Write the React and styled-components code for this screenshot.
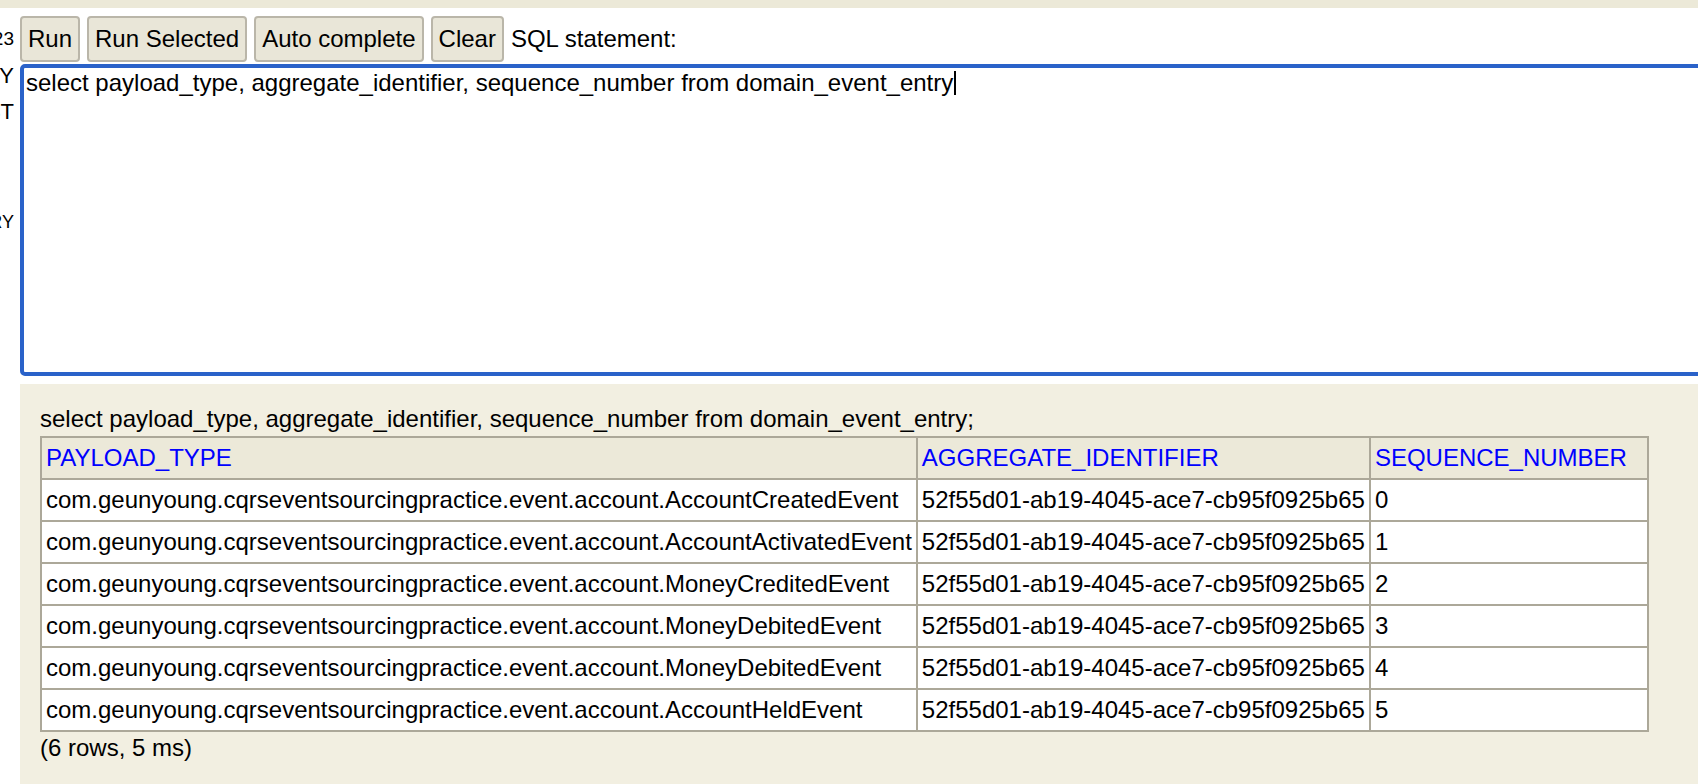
import styled, { createGlobalStyle } from "styled-components";

const GlobalStyle = createGlobalStyle`
  html, body {
    margin: 0;
    padding: 0;
    background: #ffffff;
    overflow: hidden;
  }
  body {
    font-family: "Liberation Sans", Arial, Helvetica, sans-serif;
    font-size: 24px;
    color: #000000;
  }
`;

const Page = styled.div`
  width: 100vw;
  height: 100vh;
  display: flex;
  flex-direction: column;
  overflow: hidden;
`;

const TopStrip = styled.div`
  height: 8px;
  flex: none;
  background: #ece9d8;
`;

const Body = styled.div`
  flex: 1;
  display: flex;
  min-height: 0;
`;

const Tree = styled.div`
  width: 14px;
  flex: none;
  overflow: hidden;
  padding-top: 13px;
`;

const TreeRow = styled.div`
  height: 36.6px;
  line-height: 36.6px;
  display: flex;
  justify-content: flex-end;
  white-space: nowrap;
  font-size: ${(p) => p.$size || 22}px;
`;

const Main = styled.div`
  flex: 1;
  min-width: 0;
  margin-left: 6px;
  display: flex;
  flex-direction: column;
`;

const Toolbar = styled.div`
  display: flex;
  align-items: center;
  gap: 7px;
  margin-top: 8px;
  height: 46px;
`;

const Button = styled.button`
  height: 46px;
  padding: 0 6px;
  font-family: inherit;
  font-size: 24px;
  line-height: 28px;
  color: #000;
  background: #e9e6d8;
  border: 2px solid #bab6a9;
  border-radius: 4px;
`;

const Label = styled.span`
  white-space: nowrap;
`;

const Editor = styled.div`
  margin-top: 2px;
  width: 1800px;
  height: 302px;
  flex: none;
  border: 4px solid #2a62c9;
  border-radius: 5px;
  padding: 1px 2px;
  line-height: 28px;
  white-space: nowrap;
  background: #fff;
`;

const Caret = styled.span`
  display: inline-block;
  width: 2px;
  height: 24px;
  margin-left: 1px;
  vertical-align: -4px;
  background: #000;
`;

const Results = styled.div`
  margin-top: 8px;
  flex: 1;
  background: #f2efe1;
  padding: 21px 0 0 20px;
`;

const Statement = styled.div`
  line-height: 28px;
  margin-bottom: 3px;
  white-space: nowrap;
`;

const Grid = styled.table`
  border-collapse: collapse;
  border: 2px solid #aca899;
  white-space: nowrap;
`;

const Head = styled.th`
  background: #ece9d9;
  color: #0000ff;
  font-weight: normal;
  text-align: left;
  padding: 6px ${(p) => (p.$wide ? 20 : 4)}px 6px 4px;
  line-height: 28px;
  border: 2px solid #aca899;
`;

const Cell = styled.td`
  background: #fff;
  padding: 6px 4px;
  line-height: 28px;
  border: 2px solid #aca899;
`;

const Summary = styled.div`
  line-height: 28px;
  margin-top: 2px;
`;

const sql =
  "select payload_type, aggregate_identifier, sequence_number from domain_event_entry";

const id = "52f55d01-ab19-4045-ace7-cb95f0925b65";
const pkg = "com.geunyoung.cqrseventsourcingpractice.event.account.";

const rows = [
  ["AccountCreatedEvent", 0],
  ["AccountActivatedEvent", 1],
  ["MoneyCreditedEvent", 2],
  ["MoneyDebitedEvent", 3],
  ["MoneyDebitedEvent", 4],
  ["AccountHeldEvent", 5],
];

const treeItems = [
  { text: "H2 2023", size: 19 },
  { text: "QUERY" },
  { text: "TOKEN_ENTRY_LIST" },
  { text: "" },
  { text: "" },
  { text: "SNAPSHOT_ENTRY", size: 18 },
];

export default function App() {
  return (
    <Page>
      <GlobalStyle />
      <TopStrip />
      <Body>
        <Tree>
          {treeItems.map((t, i) => (
            <TreeRow key={i} $size={t.size}>
              {t.text}
            </TreeRow>
          ))}
        </Tree>
        <Main>
          <Toolbar>
            <Button>Run</Button>
            <Button>Run Selected</Button>
            <Button>Auto complete</Button>
            <Button>Clear</Button>
            <Label>SQL statement:</Label>
          </Toolbar>
          <Editor>
            {sql}
            <Caret />
          </Editor>
          <Results>
            <Statement>{sql};</Statement>
            <Grid>
              <thead>
                <tr>
                  <Head>PAYLOAD_TYPE</Head>
                  <Head>AGGREGATE_IDENTIFIER</Head>
                  <Head $wide>SEQUENCE_NUMBER</Head>
                </tr>
              </thead>
              <tbody>
                {rows.map(([name, seq]) => (
                  <tr key={seq}>
                    <Cell>{pkg + name}</Cell>
                    <Cell>{id}</Cell>
                    <Cell>{seq}</Cell>
                  </tr>
                ))}
              </tbody>
            </Grid>
            <Summary>(6 rows, 5 ms)</Summary>
          </Results>
        </Main>
      </Body>
    </Page>
  );
}
